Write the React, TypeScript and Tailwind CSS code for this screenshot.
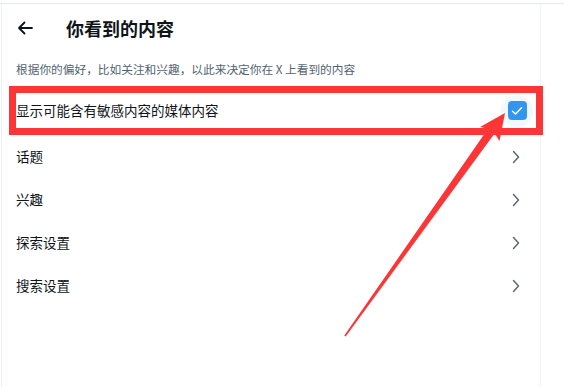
import React from "react";

const font = { fontFamily: '"Noto Sans CJK SC", "Noto Sans", sans-serif' };

function Chevron() {
  return (
    <svg width="8" height="14" viewBox="0 0 8 14" className="shrink-0">
      <path d="M1.5 1.5 L6.5 7 L1.5 12.5" fill="none" stroke="#536471" strokeWidth="1.4" strokeLinecap="round" strokeLinejoin="round" />
    </svg>
  );
}

function Row({ label }: { label: string }) {
  return (
    <div className="h-[43px] flex items-center justify-between pl-[14px] pr-[20px]">
      <span className="text-[13.5px] text-[#0f1419] leading-none">{label}</span>
      <Chevron />
    </div>
  );
}

export default function App() {
  return (
    <div className="relative w-[564px] h-[387px] bg-white overflow-hidden" style={font}>
      <div className="h-[3px]" />
      <div className="border-t border-[#e6e9ea]">
        <div className="ml-px w-[540px] h-[384px] border-l border-r border-[#eff1f2]">
          <div className="h-[48px] flex items-center">
            <div className="w-[64px] flex pl-[15px]">
              <svg width="16" height="14" viewBox="0 0 16 14">
                <path d="M15 7 H2 M7.5 1.5 L2 7 L7.5 12.5" fill="none" stroke="#0f1419" strokeWidth="1.8" strokeLinecap="round" strokeLinejoin="round" />
              </svg>
            </div>
            <span className="text-[18px] font-bold text-[#0f1419] leading-none">你看到的内容</span>
          </div>
          <div className="h-[34px] flex items-center pl-[14px]">
            <span className="text-[11.7px] text-[#536471] leading-none">根据你的偏好，比如关注和兴趣，以此来决定你在 X 上看到的内容</span>
          </div>
          <div className="h-[49px] flex items-center justify-between pl-[14px] pr-[7px]">
            <span className="text-[13.5px] text-[#0f1419] leading-none">显示可能含有敏感内容的媒体内容</span>
            <div className="w-[32px] h-[32px] rounded-full bg-[#f2f9fe] flex items-center justify-center">
              <div className="w-[19px] h-[19px] rounded-[4px] bg-[#3197ee] flex items-center justify-center">
                <svg width="12" height="10" viewBox="0 0 12 10">
                  <path d="M1.5 5.2 L4.5 8 L10.5 1.8" fill="none" stroke="white" strokeWidth="1.4" strokeLinecap="round" strokeLinejoin="round" />
                </svg>
              </div>
            </div>
          </div>
          <Row label="话题" />
          <Row label="兴趣" />
          <Row label="探索设置" />
          <Row label="搜索设置" />
        </div>
      </div>
      <div className="absolute left-[9px] top-[86px] w-[534px] h-[49px] border-[7px] border-[#fc3636]" />
      <svg className="absolute left-0 top-0 pointer-events-none" width="564" height="387" viewBox="0 0 564 387">
        <polygon
          points="344.3,335.5 488.0,128.8 480.1,127.1 505,113 499.5,141.1 494.6,133.4 345.7,336.5"
          fill="#fc3636"
        />
      </svg>
    </div>
  );
}
